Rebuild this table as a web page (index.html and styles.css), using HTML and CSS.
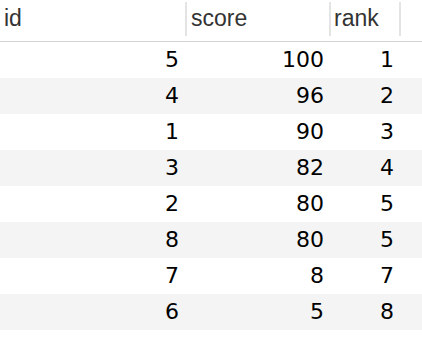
FILE: index.html
```html
<!DOCTYPE html>
<html>
<head>
<meta charset="utf-8">
<link rel="stylesheet" href="styles.css">
</head>
<body>
<div class="grid">
  <div class="row head">
    <div class="cell c1">id</div>
    <div class="cell c2">score</div>
    <div class="cell c3">rank</div>
    <div class="cell c4"></div>
  </div>
  <div class="row"><div class="cell c1">5</div><div class="cell c2">100</div><div class="cell c3">1</div><div class="cell c4"></div></div>
  <div class="row alt"><div class="cell c1">4</div><div class="cell c2">96</div><div class="cell c3">2</div><div class="cell c4"></div></div>
  <div class="row"><div class="cell c1">1</div><div class="cell c2">90</div><div class="cell c3">3</div><div class="cell c4"></div></div>
  <div class="row alt"><div class="cell c1">3</div><div class="cell c2">82</div><div class="cell c3">4</div><div class="cell c4"></div></div>
  <div class="row"><div class="cell c1">2</div><div class="cell c2">80</div><div class="cell c3">5</div><div class="cell c4"></div></div>
  <div class="row alt"><div class="cell c1">8</div><div class="cell c2">80</div><div class="cell c3">5</div><div class="cell c4"></div></div>
  <div class="row"><div class="cell c1">7</div><div class="cell c2">8</div><div class="cell c3">7</div><div class="cell c4"></div></div>
  <div class="row alt"><div class="cell c1">6</div><div class="cell c2">5</div><div class="cell c3">8</div><div class="cell c4"></div></div>
</div>
</body>
</html>
```
FILE: styles.css
```css
html, body {
  margin: 0;
  padding: 0;
  background: #ffffff;
}
.grid {
  display: flex;
  flex-direction: column;
  width: 422px;
}
.row {
  display: flex;
  height: 36px;
  font-family: "DejaVu Sans", sans-serif;
  font-size: 22px;
  line-height: 36px;
  color: #000;
}
.row.alt {
  background: #f4f4f4;
}
.cell {
  box-sizing: border-box;
  text-align: right;
  padding-right: 6px;
  white-space: nowrap;
}
.c1 { width: 187px; padding-right: 8px; }
.c2 { width: 144px; padding-right: 7px; }
.c3 { width: 70px; padding-right: 7px; }
.c4 { flex: 1; }
.row.head {
  height: 42px;
  border-bottom: 1px solid #d2d2d2;
  box-sizing: border-box;
  font-family: "Liberation Sans", Arial, sans-serif;
  font-size: 23px;
  line-height: 37px;
  color: #333;
  align-items: flex-start;
}
.head .cell {
  text-align: left;
  height: 37px;
  margin-top: 0;
  padding-left: 4px;
  padding-right: 0;
  padding-top: 0;
}
.head .c1 { padding-left: 4px; }
.head .c2 { padding-left: 4px; }
.head .c3 { padding-left: 3px; }
.head .c1, .head .c2, .head .c3 {
  background: linear-gradient(#e4e4e4, #e4e4e4) no-repeat right 2px top 2px / 2px 34px;
  background-position: right 0 top 2px;
}
```
